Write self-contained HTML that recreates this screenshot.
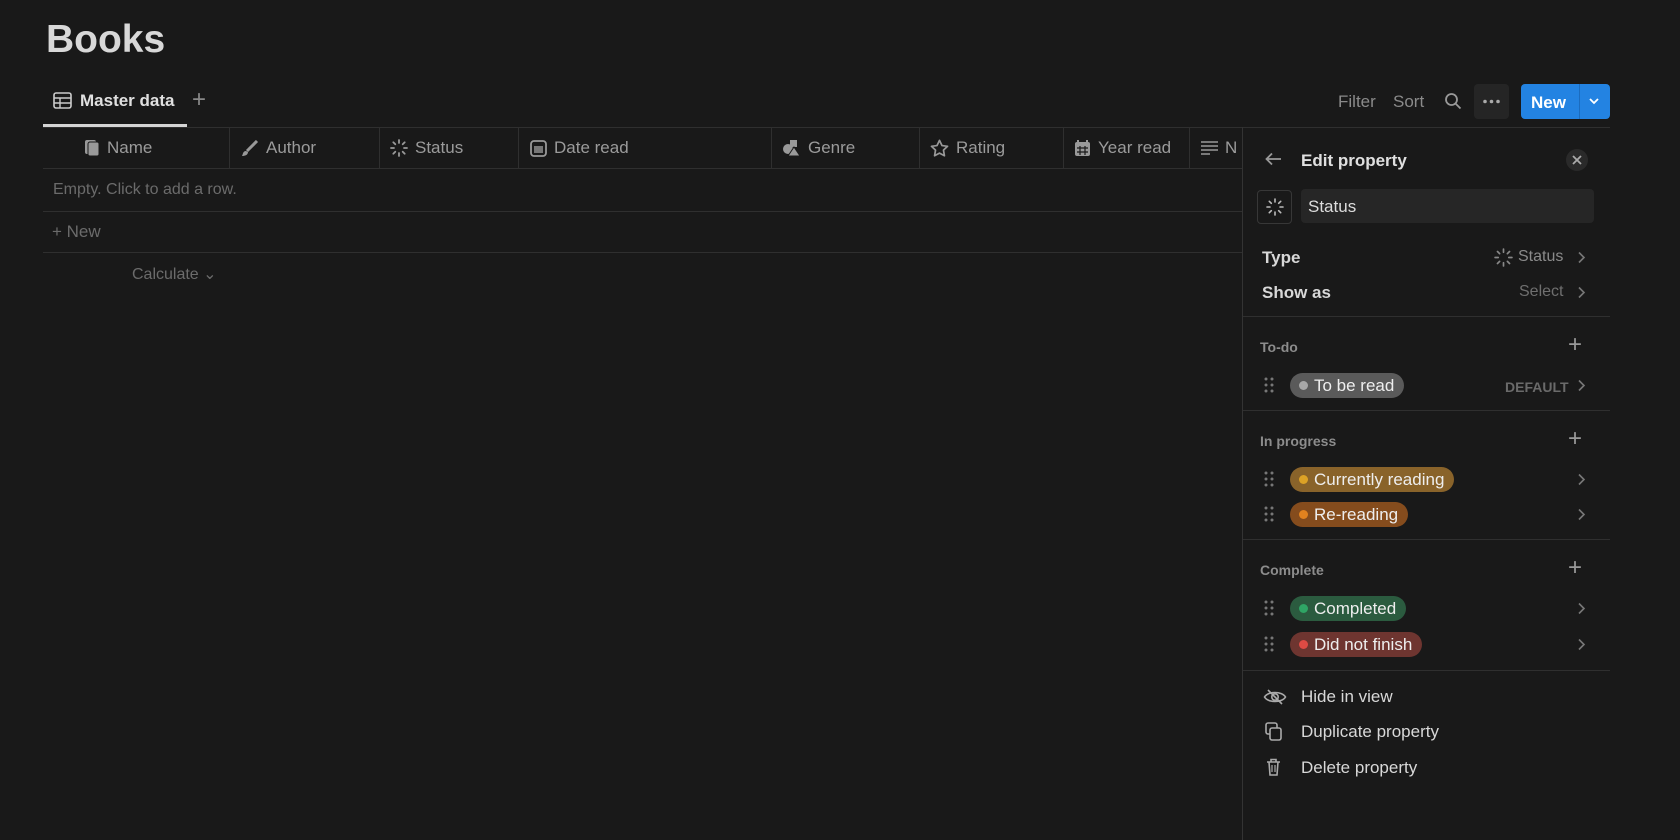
<!DOCTYPE html>
<html><head><meta charset="utf-8"><style>
*{box-sizing:border-box;margin:0;padding:0}
body{width:1680px;height:840px;background:#191919;font-family:"Liberation Sans",sans-serif;color:#d4d4d4;position:relative;overflow:hidden}
.a{position:absolute;white-space:nowrap}
.g{color:#8a8a8a}
.hd{font-size:17px;color:#9b9b9b;display:flex;align-items:center;gap:7px}
.vl{position:absolute;width:1px;background:#2f2f2f}
.hl{position:absolute;height:1px;background:#2f2f2f}
.pill{position:absolute;height:25px;border-radius:13px;font-size:17px;display:flex;align-items:center;padding:0 10px 0 9px;gap:6px;color:#eee}
.pill i{width:9px;height:9px;border-radius:50%;display:inline-block}
.drag{position:absolute;left:1264px}
.chev{position:absolute;left:1577px}
.plus{position:absolute;left:1568px;color:#999;font-size:24px;line-height:1}
.sec{position:absolute;left:1260px;font-size:14px;color:#8c8c8c;font-weight:bold}
.mi{position:absolute;left:1301px;font-size:17px;color:#d8d8d8}
</style></head><body>
<svg width="0" height="0" style="position:absolute"><defs>
<g id="dr" fill="#777"><circle cx="2" cy="2" r="1.5"/><circle cx="8" cy="2" r="1.5"/><circle cx="2" cy="8" r="1.5"/><circle cx="8" cy="8" r="1.5"/><circle cx="2" cy="14" r="1.5"/><circle cx="8" cy="14" r="1.5"/></g>
<path id="cv" d="M2 1.5l5 5-5 5" fill="none" stroke="#777" stroke-width="1.6"/>
</defs></svg>
<div class="a" style="left:46px;top:18px;font-size:39px;font-weight:bold;color:#d8d8d8">Books</div>

<svg class="a" style="left:53px;top:92px" width="19" height="17" viewBox="0 0 19 17"><rect x="1" y="1" width="17" height="15" rx="2" fill="none" stroke="#ccc" stroke-width="1.6"/><path d="M1 6h17M1 11h17M7 6v10" stroke="#ccc" stroke-width="1.4"/></svg>
<div class="a" style="left:80px;top:91px;font-size:17px;font-weight:bold;color:#e0e0e0">Master data</div>
<div class="a" style="left:192px;top:86px;font-size:24px;color:#888">+</div>
<div class="a" style="left:43px;top:124px;width:144px;height:3px;background:#d4d4d4"></div>

<div class="a g" style="left:1338px;top:92px;font-size:17px">Filter</div>
<div class="a g" style="left:1393px;top:92px;font-size:17px">Sort</div>
<svg class="a" style="left:1444px;top:92px" width="18" height="18" viewBox="0 0 18 18"><circle cx="7.5" cy="7.5" r="5.5" fill="none" stroke="#999" stroke-width="1.8"/><path d="M11.5 11.5l5 5" stroke="#999" stroke-width="1.8"/></svg>
<div class="a" style="left:1474px;top:84px;width:35px;height:35px;background:#252525;border-radius:4px"></div>
<svg class="a" style="left:1482px;top:99px" width="19" height="5"><circle cx="3" cy="2.5" r="1.8" fill="#aaa"/><circle cx="9.5" cy="2.5" r="1.8" fill="#aaa"/><circle cx="16" cy="2.5" r="1.8" fill="#aaa"/></svg>
<div class="a" style="left:1521px;top:84px;width:89px;height:35px;background:#2383e2;border-radius:4px"></div>
<div class="a" style="left:1531px;top:93px;font-size:17px;font-weight:bold;color:#fff">New</div>
<div class="a" style="left:1579px;top:84px;width:1px;height:35px;background:#1b6cbf"></div>
<svg class="a" style="left:1588px;top:97px" width="12" height="9" viewBox="0 0 12 9"><path d="M2 2l4 4 4-4" fill="none" stroke="#fff" stroke-width="1.8"/></svg>

<div class="hl" style="left:43px;top:127px;width:1567px"></div>
<div class="hl" style="left:43px;top:168px;width:1199px"></div>
<div class="hl" style="left:43px;top:211px;width:1199px"></div>
<div class="hl" style="left:43px;top:252px;width:1199px"></div>
<div class="vl" style="left:229px;top:127px;height:41px"></div>
<div class="vl" style="left:379px;top:127px;height:41px"></div>
<div class="vl" style="left:518px;top:127px;height:41px"></div>
<div class="vl" style="left:771px;top:127px;height:41px"></div>
<div class="vl" style="left:919px;top:127px;height:41px"></div>
<div class="vl" style="left:1063px;top:127px;height:41px"></div>
<div class="vl" style="left:1189px;top:127px;height:41px"></div>
<div class="vl" style="left:1242px;top:127px;height:713px;background:#333"></div>

<div class="a hd" style="left:85px;top:138px"><svg width="15" height="16"><rect x="0" y="0" width="11" height="14" rx="2" fill="#999"/><rect x="3" y="2" width="11" height="14" rx="2" fill="#999" stroke="#191919" stroke-width="1"/></svg>Name</div>
<div class="a hd" style="left:241px;top:138px"><svg width="18" height="17"><path d="M16 1L6 11" stroke="#999" stroke-width="3"/><path d="M5 11c-3 0-3 3-4 5 3 0 6-1 6-4z" fill="#999"/></svg>Author</div>
<div class="a hd" style="left:390px;top:138px"><svg width="18" height="18" viewBox="0 0 18 18" stroke="#999" stroke-width="1.8" stroke-linecap="round"><path d="M9 1v3M9 14v3M1 9h3M14 9h3M3.3 3.3l2 2M12.7 12.7l2 2M3.3 14.7l2-2M12.7 5.3l2-2"/></svg>Status</div>
<div class="a hd" style="left:530px;top:138px"><svg width="17" height="17"><rect x="1" y="1" width="15" height="15" rx="3" fill="none" stroke="#999" stroke-width="1.8"/><rect x="4" y="6" width="9" height="7" fill="#777"/></svg>Date read</div>
<div class="a hd" style="left:782px;top:138px"><svg width="19" height="18"><circle cx="6" cy="10" r="5" fill="#999"/><rect x="8" y="1" width="7" height="7" fill="#999"/><path d="M12 8l6 9h-12z" fill="#999" stroke="#191919"/></svg>Genre</div>
<div class="a hd" style="left:930px;top:138px"><svg width="19" height="18" viewBox="0 0 20 19"><path d="M10 1.5l2.6 5.4 5.9.8-4.3 4.1 1 5.9L10 14.9l-5.2 2.8 1-5.9L1.5 7.7l5.9-.8z" fill="none" stroke="#999" stroke-width="1.8" stroke-linejoin="round"/></svg>Rating</div>
<div class="a hd" style="left:1074px;top:138px"><svg width="17" height="18"><rect x="1" y="3" width="15" height="14" rx="2" fill="#999"/><path d="M4 1v4M13 1v4" stroke="#999" stroke-width="2"/><path d="M3 9h11M3 13h11M6 7v9M11 7v9" stroke="#191919" stroke-width="1.2"/></svg>Year read</div>
<div class="a hd" style="left:1201px;top:138px"><svg width="17" height="16" stroke="#999" stroke-width="1.6"><path d="M0 2h17M0 6h17M0 10h17M0 14h9"/></svg>N</div>

<div class="a" style="left:53px;top:181px;font-size:16px;color:#6b6b6b">Empty. Click to add a row.</div>
<div class="a" style="left:52px;top:222px;font-size:17px;color:#6b6b6b">+ New</div>
<div class="a" style="left:132px;top:264px;font-size:16px;color:#6b6b6b">Calculate ⌄</div>

<svg class="a" style="left:1265px;top:152px" width="17" height="14"><path d="M16 7H2M7 1.5L1.5 7 7 12.5" fill="none" stroke="#999" stroke-width="1.8"/></svg>
<div class="a" style="left:1301px;top:151px;font-size:17px;font-weight:bold;color:#e0e0e0">Edit property</div>
<div class="a" style="left:1566px;top:149px;width:22px;height:22px;border-radius:50%;background:#2a2a2a"></div>
<svg class="a" style="left:1572px;top:155px" width="10" height="10"><path d="M1 1l8 8M9 1l-8 8" stroke="#aaa" stroke-width="1.8"/></svg>
<div class="a" style="left:1257px;top:190px;width:35px;height:34px;border:1px solid #373737;border-radius:4px"></div>
<svg class="a" style="left:1266px;top:198px" width="18" height="18" viewBox="0 0 18 18" stroke="#bbb" stroke-width="1.6" stroke-linecap="round"><path d="M9 1v3M9 14v3M1 9h3M14 9h3M3.3 3.3l2 2M12.7 12.7l2 2M3.3 14.7l2-2M12.7 5.3l2-2"/></svg>
<div class="a" style="left:1301px;top:189px;width:293px;height:34px;background:#262626;border-radius:4px"></div>
<div class="a" style="left:1308px;top:197px;font-size:17px;color:#ddd">Status</div>

<div class="mi" style="left:1262px;top:248px;font-weight:bold;color:#d8d8d8">Type</div>
<svg class="a" style="left:1494px;top:248px" width="19" height="19" viewBox="0 0 18 18" stroke="#888" stroke-width="1.6" stroke-linecap="round"><path d="M9 1v3M9 14v3M1 9h3M14 9h3M3.3 3.3l2 2M12.7 12.7l2 2M3.3 14.7l2-2M12.7 5.3l2-2"/></svg>
<div class="a g" style="left:1518px;top:248px;font-size:16px">Status</div>
<svg class="chev" style="top:251px" width="10" height="13"><use href="#cv"/></svg>
<div class="mi" style="left:1262px;top:283px;font-weight:bold;color:#d8d8d8">Show as</div>
<div class="a g" style="left:1519px;top:283px;font-size:16px;color:#6f6f6f">Select</div>
<svg class="chev" style="top:286px" width="10" height="13"><use href="#cv"/></svg>
<div class="hl" style="left:1243px;top:316px;width:367px"></div>

<div class="sec" style="top:339px">To-do</div><div class="plus" style="top:333px">+</div>
<svg class="drag" style="top:377px" width="10" height="16"><use href="#dr"/></svg>
<div class="pill" style="left:1290px;top:373px;background:#5a5a5a"><i style="background:#a8a8a8"></i>To be read</div>
<div class="a" style="left:1505px;top:379px;font-size:14px;color:#6a6a6a;font-weight:bold">DEFAULT</div>
<svg class="chev" style="top:379px" width="10" height="13"><use href="#cv"/></svg>
<div class="hl" style="left:1243px;top:410px;width:367px"></div>

<div class="sec" style="top:433px">In progress</div><div class="plus" style="top:427px">+</div>
<svg class="drag" style="top:471px" width="10" height="16"><use href="#dr"/></svg>
<div class="pill" style="left:1290px;top:467px;background:#89632a"><i style="background:#dca226"></i>Currently reading</div>
<svg class="chev" style="top:473px" width="10" height="13"><use href="#cv"/></svg>
<svg class="drag" style="top:506px" width="10" height="16"><use href="#dr"/></svg>
<div class="pill" style="left:1290px;top:502px;background:#854c1d"><i style="background:#e2821f"></i>Re-reading</div>
<svg class="chev" style="top:508px" width="10" height="13"><use href="#cv"/></svg>
<div class="hl" style="left:1243px;top:539px;width:367px"></div>

<div class="sec" style="top:562px">Complete</div><div class="plus" style="top:556px">+</div>
<svg class="drag" style="top:600px" width="10" height="16"><use href="#dr"/></svg>
<div class="pill" style="left:1290px;top:596px;background:#2b5b3f"><i style="background:#2fa565"></i>Completed</div>
<svg class="chev" style="top:602px" width="10" height="13"><use href="#cv"/></svg>
<svg class="drag" style="top:636px" width="10" height="16"><use href="#dr"/></svg>
<div class="pill" style="left:1290px;top:632px;background:#6e3530"><i style="background:#de4b44"></i>Did not finish</div>
<svg class="chev" style="top:638px" width="10" height="13"><use href="#cv"/></svg>
<div class="hl" style="left:1243px;top:670px;width:367px"></div>

<div class="mi" style="top:687px">Hide in view</div>
<svg class="a" style="left:1263px;top:688px" width="24" height="18" viewBox="0 0 24 18"><path d="M1.5 9C5 3 19 3 22.5 9 19 15 5 15 1.5 9z" fill="none" stroke="#aaa" stroke-width="1.6"/><circle cx="12" cy="9" r="3.2" fill="none" stroke="#aaa" stroke-width="1.6"/><path d="M5 2l14 14" stroke="#aaa" stroke-width="1.6"/></svg>
<div class="mi" style="top:722px">Duplicate property</div>
<svg class="a" style="left:1265px;top:722px" width="18" height="19"><rect x="1" y="1" width="11" height="11" rx="2" fill="none" stroke="#aaa" stroke-width="1.6"/><rect x="5" y="6" width="11" height="12" rx="2" fill="#191919" stroke="#aaa" stroke-width="1.6"/></svg>
<div class="mi" style="top:758px">Delete property</div>
<svg class="a" style="left:1266px;top:758px" width="15" height="18"><path d="M1 4h13M5 4V1.5h5V4M3 4l1 13h7l1-13" fill="none" stroke="#aaa" stroke-width="1.6"/><path d="M6 7v7M9 7v7" stroke="#aaa" stroke-width="1.2"/></svg>
</body></html>
